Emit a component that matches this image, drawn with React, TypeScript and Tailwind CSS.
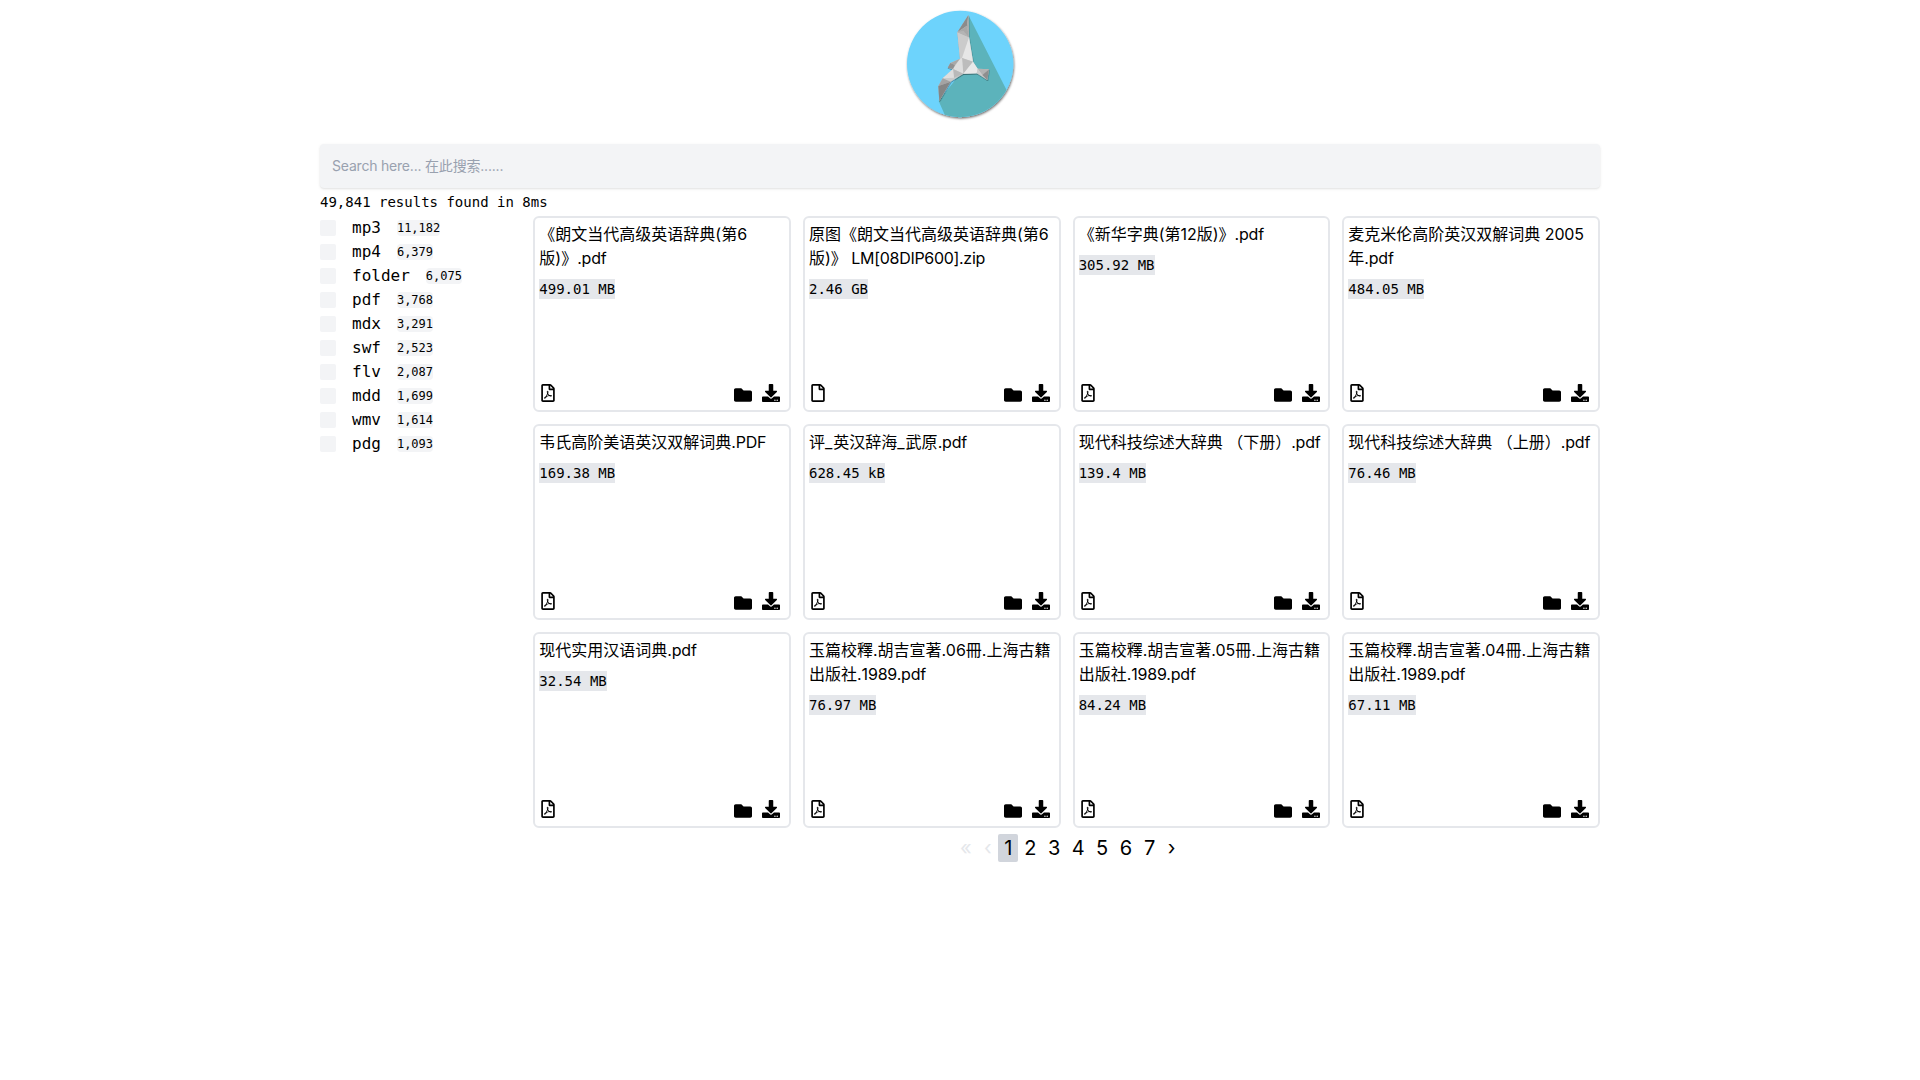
import { FaRegFilePdf, FaRegFile, FaFolder, FaDownload } from "react-icons/fa";

const types = [
  ["mp3", "11,182"],
  ["mp4", "6,379"],
  ["folder", "6,075"],
  ["pdf", "3,768"],
  ["mdx", "3,291"],
  ["swf", "2,523"],
  ["flv", "2,087"],
  ["mdd", "1,699"],
  ["wmv", "1,614"],
  ["pdg", "1,093"],
];

const files = [
  ["《朗文当代高级英语辞典(第6版)》.pdf", "499.01 MB"],
  ["原图《朗文当代高级英语辞典(第6版)》 LM[08DIP600].zip", "2.46 GB"],
  ["《新华字典(第12版)》.pdf", "305.92 MB"],
  ["麦克米伦高阶英汉双解词典 2005年.pdf", "484.05 MB"],
  ["韦氏高阶美语英汉双解词典.PDF", "169.38 MB"],
  ["评_英汉辞海_武原.pdf", "628.45 kB"],
  ["现代科技综述大辞典 （下册）.pdf", "139.4 MB"],
  ["现代科技综述大辞典 （上册）.pdf", "76.46 MB"],
  ["现代实用汉语词典.pdf", "32.54 MB"],
  ["玉篇校釋.胡吉宣著.06冊.上海古籍出版社.1989.pdf", "76.97 MB"],
  ["玉篇校釋.胡吉宣著.05冊.上海古籍出版社.1989.pdf", "84.24 MB"],
  ["玉篇校釋.胡吉宣著.04冊.上海古籍出版社.1989.pdf", "67.11 MB"],
];

function Logo() {
  return (
    <svg viewBox="0 0 390 390" className="h-[130px] w-[130px]">
      <defs>
        <clipPath id="disc">
          <circle cx="195.5" cy="192" r="159.5" />
        </clipPath>
        <filter id="discShadow" x="-10%" y="-10%" width="120%" height="120%">
          <feDropShadow dx="2" dy="4" stdDeviation="2.5" floodColor="#000" floodOpacity="0.6" />
        </filter>
        <filter id="birdShadow" x="-10%" y="-10%" width="120%" height="120%">
          <feDropShadow dx="1" dy="3" stdDeviation="2" floodColor="#000" floodOpacity="0.4" />
        </filter>
      </defs>
      <circle cx="195.5" cy="192" r="159.5" fill="#6dd3fc" filter="url(#discShadow)" />
      <path clipPath="url(#disc)" d="M220 45 L345 290 L300 380 L165 380 L131 303 L200 215Z" fill="#5cb3bb" />
      <g filter="url(#birdShadow)">
        <path d="M220 45 L222 112 L234 185 L248 206 L282 208 L277 240 L245 220 L205 221 L167 245 L133 303 L130 258 L143 235 L174 207 L158 203 L166 189 L195 176 L187 97Z" fill="#c9c9c9" />
        <path d="M220 45 L187 97 L216 77Z" fill="#8b8b8b" />
        <path d="M220 45 L216 77 L222 112Z" fill="#a9a9a9" />
        <path d="M216 77 L187 97 L222 112Z" fill="#a8a8a8" />
        <path d="M187 97 L222 112 L201 174 L195 176Z" fill="#cbcbcb" />
        <path d="M222 112 L234 185 L201 174Z" fill="#e6e6e6" />
        <path d="M187 97 L205 92 L222 112Z" fill="#b4b4b4" />
        <path d="M201 174 L234 185 L205 221Z" fill="#bcbcbc" />
        <path d="M195 176 L201 174 L205 221 L174 207Z" fill="#dedede" />
        <path d="M234 185 L248 206 L245 220 L205 221Z" fill="#e9e9e9" />
        <path d="M248 206 L282 208 L262 225Z" fill="#b3b3b3" />
        <path d="M282 208 L277 240 L262 225Z" fill="#8e8e8e" />
        <path d="M248 206 L262 225 L245 220Z" fill="#cccccc" />
        <path d="M166 189 L195 176 L180 195Z" fill="#a8a8a8" />
        <path d="M158 203 L166 189 L180 195 L174 207Z" fill="#919191" />
        <path d="M174 207 L205 221 L177 233Z" fill="#b9b9b9" />
        <path d="M174 207 L177 233 L143 235Z" fill="#dedede" />
        <path d="M143 235 L167 245 L130 258Z" fill="#a3a3a3" />
        <path d="M130 258 L167 245 L133 303Z" fill="#858585" />
      </g>
    </svg>
  );
}

// Latin runs are set slightly tighter than the CJK glyphs around them.
function FileName({ name }: { name: string }) {
  return (
    <div className="leading-6">
      {name.split(/([A-Z[\]\d]{4,}[\w[\].]*|\.\w+$|_)/).map((part, i) =>
        i % 2 === 0 ? (
          part
        ) : part === "_" ? (
          <span key={i} className="tracking-[1px]">{part}</span>
        ) : (
          <span key={i} className={part.length > 12 ? "tracking-[-0.3px]" : "tracking-[-0.2px]"}>{part}</span>
        ),
      )}
    </div>
  );
}

function Card({ name, size }: { name: string; size: string }) {
  const Icon = name.endsWith(".zip") ? FaRegFile : FaRegFilePdf;
  return (
    <div className="flex h-[196px] flex-col rounded-md border-2 border-gray-200 p-1">
      <FileName name={name} />
      <div className="mt-[9px] self-start bg-gray-200 font-['DejaVu_Sans_Mono',monospace] text-sm leading-5">{size}</div>
      <div className="mt-auto mb-1 flex items-end">
        <Icon size={18} />
        <FaFolder size={18} className="ml-auto translate-y-[2px]" />
        <FaDownload size={18} className="mr-[4.6px] ml-[10px]" />
      </div>
    </div>
  );
}

export default function App() {
  return (
    <div className="mx-auto w-[1280px] font-[Inter,'Noto_Sans_CJK_SC',sans-serif] text-base text-black">
      <div className="flex justify-center">
        <Logo />
      </div>
      <input
        className="mt-[14px] block h-11 w-full rounded bg-gray-100 px-3 pb-0.5 text-sm tracking-[-0.2px] shadow placeholder:text-gray-400"
        placeholder="Search here... 在此搜索......"
      />
      <div className="h-7 pt-1 font-['DejaVu_Sans_Mono',monospace] text-sm leading-5">49,841 results found in 8ms</div>
      <div className="flex">
        <div className="w-1/6 font-['DejaVu_Sans_Mono',monospace]">
          {types.map(([t, n]) => (
            <div key={t} className="flex h-6 items-center">
              <span className="h-4 w-4 rounded-xs bg-gray-100" />
              <span className="ml-4">{t}</span>
              <span className="ml-4 rounded bg-gray-100 text-xs">{n}</span>
            </div>
          ))}
        </div>
        <div className="w-5/6">
          <div className="grid grid-cols-4 gap-3">
            {files.map(([n, s]) => (
              <Card key={n} name={n} size={s} />
            ))}
          </div>
          <div className="mt-1.5 flex justify-center pl-[2px] text-xl leading-7">
            <span className="px-1.5 text-gray-200">«</span>
            <span className="px-[6.5px] text-gray-200">‹</span>
            <span className="rounded-xs bg-gray-300 px-1.5">1</span>
            {["2", "3", "4", "5", "6", "7"].map((p) => (
              <span key={p} className="w-[23.9px] text-center">{p}</span>
            ))}
            <span className="px-1.5">›</span>
          </div>
        </div>
      </div>
    </div>
  );
}
